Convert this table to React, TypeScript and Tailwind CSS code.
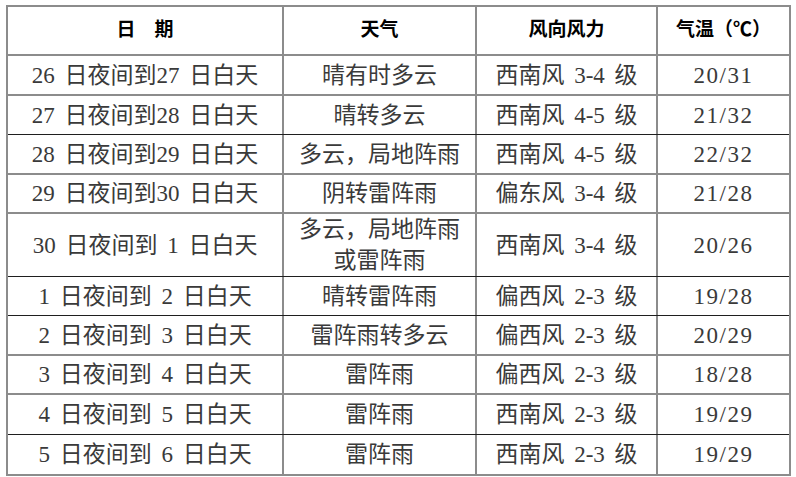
import React from "react";

type Row = {
  date: string;
  weather: React.ReactNode;
  wind: string;
  temp: string;
  h: string;
  line: string;
};

const GRAY = "border-b-2 border-[#8c8c8c]";
const BLACK = "border-b border-[#1f1f1f]";

const rows: Row[] = [
  { date: "26 日夜间到27 日白天", weather: "晴有时多云", wind: "西南风 3-4 级", temp: "20/31", h: "h-[40px]", line: GRAY },
  { date: "27 日夜间到28 日白天", weather: "晴转多云", wind: "西南风 4-5 级", temp: "21/32", h: "h-[39px]", line: BLACK },
  { date: "28 日夜间到29 日白天", weather: "多云，局地阵雨", wind: "西南风 4-5 级", temp: "22/32", h: "h-[40px]", line: GRAY },
  { date: "29 日夜间到30 日白天", weather: "阴转雷阵雨", wind: "偏东风 3-4 级", temp: "21/28", h: "h-[39px]", line: GRAY },
  {
    date: "30 日夜间到 1 日白天",
    weather: (
      <div className="flex flex-col items-center leading-[31px]">
        <span>多云，局地阵雨</span>
        <span>或雷阵雨</span>
      </div>
    ),
    wind: "西南风 3-4 级",
    temp: "20/26",
    h: "h-[63px]",
    line: BLACK,
  },
  { date: "1 日夜间到 2 日白天", weather: "晴转雷阵雨", wind: "偏西风 2-3 级", temp: "19/28", h: "h-[39px]", line: BLACK },
  { date: "2 日夜间到 3 日白天", weather: "雷阵雨转多云", wind: "偏西风 2-3 级", temp: "20/29", h: "h-[40px]", line: GRAY },
  { date: "3 日夜间到 4 日白天", weather: "雷阵雨", wind: "偏西风 2-3 级", temp: "18/28", h: "h-[39px]", line: GRAY },
  { date: "4 日夜间到 5 日白天", weather: "雷阵雨", wind: "西南风 2-3 级", temp: "19/29", h: "h-[40px]", line: BLACK },
  { date: "5 日夜间到 6 日白天", weather: "雷阵雨", wind: "西南风 2-3 级", temp: "19/29", h: "h-[39px]", line: "" },
];

const grid = "grid grid-cols-[276px_193px_181px_131px]";
const cell = "flex items-center justify-center border-r-2 border-[#8c8c8c]";
const lastCell = "flex items-center justify-center";

export default function App() {
  return (
    <div className="w-[796px] h-[477px] bg-white overflow-hidden">
      <div
        className="ml-[6px] mt-[5px] w-[785px] border-2 border-[#8c8c8c] text-[#3a3a3a]"
        style={{ fontFamily: '"Liberation Serif", "Noto Sans CJK SC", serif' }}
      >
        <div className={`${grid} h-[49px] ${GRAY} text-[19px] font-bold text-black`}>
          <div className={cell}>日　期</div>
          <div className={cell}>天气</div>
          <div className={cell}>风向风力</div>
          <div className={lastCell}>气温（℃）</div>
        </div>
        {rows.map((r, i) => (
          <div key={i} className={`${grid} ${r.h} ${r.line} text-[23px] leading-none [word-spacing:4px]`}>
            <div className={cell}>{r.date}</div>
            <div className={cell}>{r.weather}</div>
            <div className={cell}>{r.wind}</div>
            <div className={`${lastCell} tracking-[1.5px]`}>{r.temp}</div>
          </div>
        ))}
      </div>
    </div>
  );
}
